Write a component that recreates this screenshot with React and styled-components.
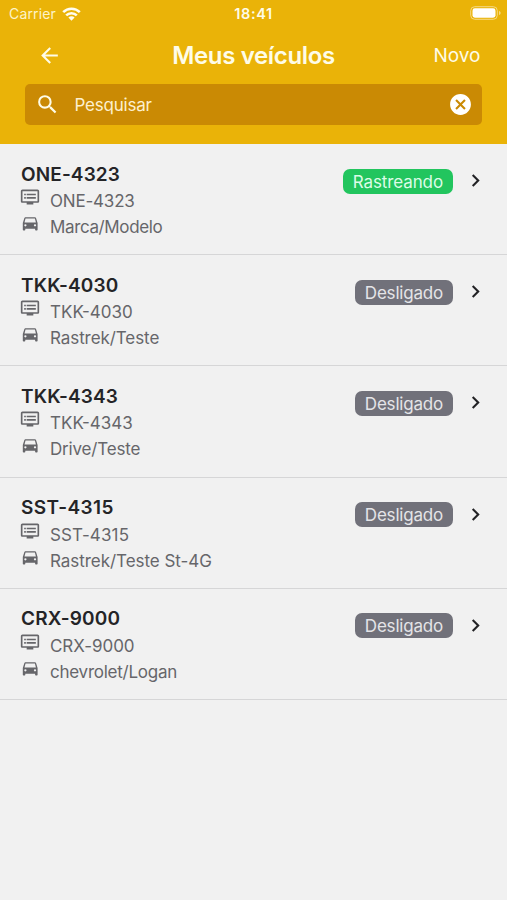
import React from "react";
import styled, { createGlobalStyle } from "styled-components";
import {
  MdArrowBack,
  MdCancel,
  MdChevronRight,
  MdDvr,
  MdSearch,
} from "react-icons/md";

const GlobalStyle = createGlobalStyle`
  * { box-sizing: border-box; }
  body {
    margin: 0;
    background: #f1f1f1;
    font-family: Inter, "Liberation Sans", sans-serif;
  }
  svg { display: block; flex: none; }
`;

const Screen = styled.div`
  width: 507px;
  height: 900px;
  overflow: hidden;
  background: #f1f1f1;
`;

const Header = styled.header`
  height: 144px;
  background: #eab308;
  color: #fefce8;
`;

const StatusBar = styled.div`
  display: grid;
  grid-template-columns: 1fr auto 1fr;
  align-items: center;
  height: 27px;
  padding: 0 5px;
  font-size: 14px;
  line-height: 27px;
`;

const Carrier = styled.div`
  display: flex;
  align-items: center;
  gap: 6px;
  padding-left: 4px;
  letter-spacing: 0.15px;
  color: #fdf3c8;
`;

const Clock = styled.div`
  font-weight: 600;
  font-size: 14.5px;
  letter-spacing: 0.6px;
`;

const BatterySlot = styled.div`
  display: flex;
  justify-content: flex-end;
  margin-top: -1px;
`;

const NavBar = styled.div`
  display: grid;
  grid-template-columns: 1fr auto 1fr;
  align-items: center;
  height: 56px;
  padding: 0 26.5px;
  margin-bottom: 1px;
`;

const BackButton = styled.button`
  justify-self: start;
  margin-left: 10.5px;
  padding: 0;
  border: 0;
  background: none;
  color: inherit;
`;

const Title = styled.h1`
  margin: 0;
  font-size: 24px;
  font-weight: 600;
  letter-spacing: -0.35px;
`;

const NewButton = styled.button`
  justify-self: end;
  padding: 0;
  border: 0;
  background: none;
  color: inherit;
  font: 400 19px Inter, sans-serif;
`;

const SearchBox = styled.div`
  display: flex;
  align-items: center;
  height: 41px;
  margin: 0 25px;
  padding: 0 9.5px;
  border-radius: 5px;
  background: #ca8a04;
`;

const SearchText = styled.span`
  flex: 1;
  margin-left: 15px;
  font-size: 17px;
  letter-spacing: -0.22px;
  color: #fdf0cf;
`;

const List = styled.ul`
  margin: 0;
  padding: 0;
  list-style: none;
`;

const Row = styled.li`
  display: flex;
  align-items: flex-start;
  height: 111.2px;
  padding: 17px 19.5px 0 20px;
  border-bottom: 1.5px solid #d6d6d7;
`;

const Info = styled.div`
  flex: 1;
`;

const Plate = styled.div`
  height: 25.5px;
  margin-top: 0.5px;
  padding-left: 1px;
  font-size: 19px;
  line-height: 26px;
  font-weight: 600;
  letter-spacing: ${(p) => p.$tracking}px;
  color: #242427;
`;

const Detail = styled.div`
  display: flex;
  align-items: flex-start;
  gap: 10px;
  height: 26px;
  font-size: 17px;
  line-height: 29px;
  letter-spacing: ${(p) => p.$tracking}px;
  color: #66666a;
`;

const Badge = styled.span`
  height: 25px;
  margin-top: 7.5px;
  padding: 0 10px;
  border-radius: 7px;
  font-size: 17px;
  line-height: 27px;
  letter-spacing: ${(p) => (p.$active ? -0.1 : -0.2)}px;
  background: ${(p) => (p.$active ? "#22c55e" : "#71717a")};
  color: ${(p) => (p.$active ? "#dcfce7" : "#e4e4e7")};
`;

const Chevron = styled(MdChevronRight)`
  margin: 7px 0 0 9.5px;
  color: #222225;
`;

// tracking: letter spacing in px for the title, the plate and the model lines
const vehicles = [
  { plate: "ONE-4323", model: "Marca/Modelo", active: true, tracking: [0.12, -0.2, -0.37] },
  { plate: "TKK-4030", model: "Rastrek/Teste", tracking: [0.14, 0, -0.08] },
  { plate: "TKK-4343", model: "Drive/Teste", tracking: [0.14, 0, -0.17] },
  { plate: "SST-4315", model: "Rastrek/Teste St-4G", tracking: [0.38, 0.13, -0.04] },
  { plate: "CRX-9000", model: "chevrolet/Logan", tracking: [0.14, -0.05, -0.25] },
];

function WifiIcon() {
  return (
    <svg width="19" height="14" viewBox="0 0 19 14" fill="none" stroke="#fffdf0" strokeWidth="2.6">
      <path d="M1.2 5.2a11.8 11.8 0 0 1 16.6 0" />
      <path d="M4.2 8.4a7.5 7.5 0 0 1 10.6 0" />
      <path d="M9.5 13.7 6.4 10.6a4.4 4.4 0 0 1 6.2 0Z" fill="#fffdf0" stroke="none" />
    </svg>
  );
}

function BatteryIcon() {
  return (
    <svg width="32" height="14" viewBox="0 0 32 14">
      <rect x="0.7" y="0.7" width="26.6" height="12.6" rx="4" fill="none" stroke="#f5d984" />
      <rect x="2.5" y="2.3" width="23" height="9.4" rx="2.4" fill="#fff" />
      <path d="M29 5v4c1.1-.4 1.6-1.1 1.6-2S30.1 5.4 29 5Z" fill="#f5d984" />
    </svg>
  );
}

function CarIcon() {
  return (
    <svg width="20" height="20" viewBox="0 0 20 20" fill="currentColor">
      <path
        fillRule="evenodd"
        d="M5.9 4.2h8.6c.9 0 1.5.4 1.7 1.2l1.4 4.7v6.6c0 .5-.3.8-.8.8h-.9c-.5 0-.8-.3-.8-.8v-1H5.3v1c0 .5-.3.8-.8.8h-.9c-.5 0-.8-.3-.8-.8v-6.6l1.4-4.7c.2-.8.8-1.2 1.7-1.2ZM5.5 5.6 4.5 9.4h11.4l-1-3.800ZM5.400 11.200a1.150 1.150 0 1 0 0 2.300a1.150 1.150 0 1 0 0-2.300ZM15 11.200a1.150 1.150 0 1 0 0 2.300a1.150 1.150 0 1 0 0-2.300Z"
      />
    </svg>
  );
}

export default function App() {
  return (
    <Screen>
      <GlobalStyle />
      <Header>
        <StatusBar>
          <Carrier>
            Carrier
            <WifiIcon />
          </Carrier>
          <Clock>18:41</Clock>
          <BatterySlot>
            <BatteryIcon />
          </BatterySlot>
        </StatusBar>
        <NavBar>
          <BackButton aria-label="Voltar">
            <MdArrowBack size={25} />
          </BackButton>
          <Title>Meus veículos</Title>
          <NewButton>Novo</NewButton>
        </NavBar>
        <SearchBox>
          <MdSearch size={25} />
          <SearchText>Pesquisar</SearchText>
          <MdCancel size={25} color="#fff" />
        </SearchBox>
      </Header>
      <List>
        {vehicles.map((v) => (
          <Row key={v.plate}>
            <Info>
              <Plate $tracking={v.tracking[0]}>{v.plate}</Plate>
              <Detail $tracking={v.tracking[1]}>
                <MdDvr size={20} />
                {v.plate}
              </Detail>
              <Detail $tracking={v.tracking[2]}>
                <CarIcon />
                {v.model}
              </Detail>
            </Info>
            <Badge $active={v.active}>{v.active ? "Rastreando" : "Desligado"}</Badge>
            <Chevron size={25} />
          </Row>
        ))}
      </List>
    </Screen>
  );
}
